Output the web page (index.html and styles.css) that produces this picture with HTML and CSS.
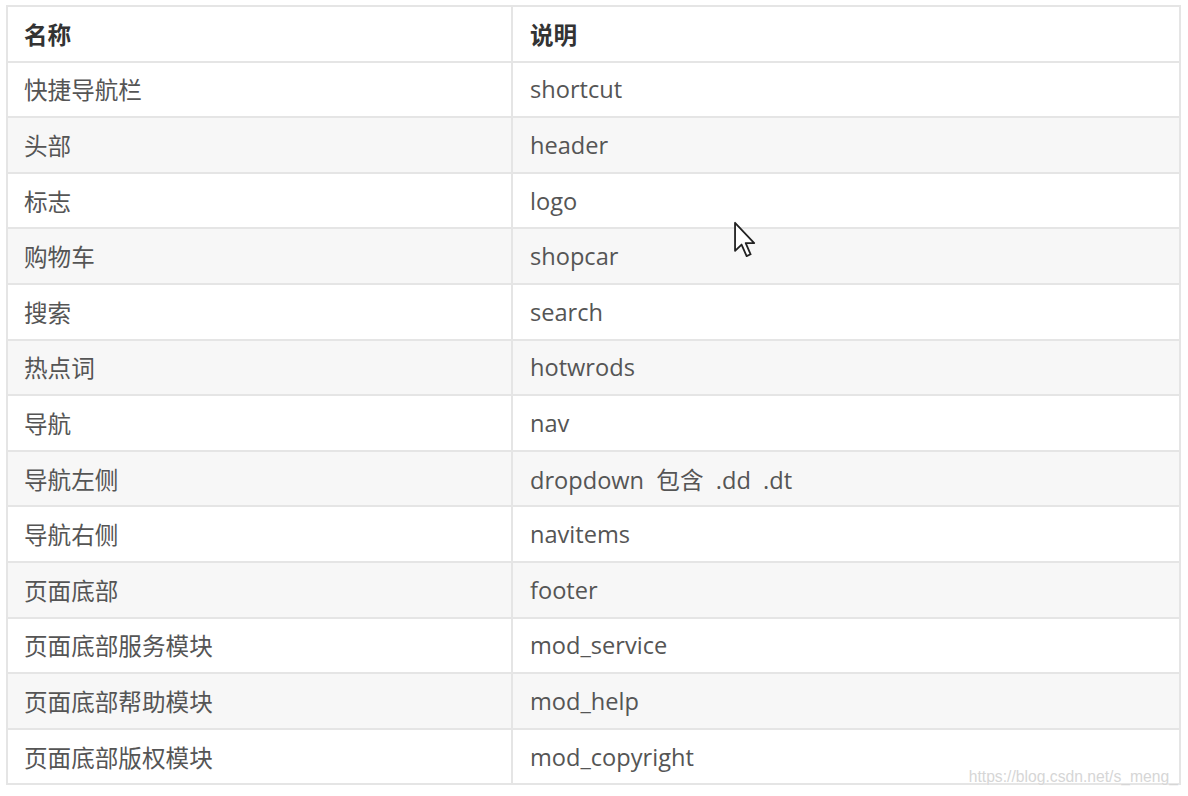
FILE: index.html
```html
<!DOCTYPE html>
<html lang="zh">
<head>
<meta charset="utf-8">
<link rel="stylesheet" href="styles.css">
</head>
<body>
<div class="page">
  <table class="names">
    <thead>
      <tr><th class="col-name">名称</th><th class="col-desc">说明</th></tr>
    </thead>
    <tbody>
      <tr><td>快捷导航栏</td><td>shortcut</td></tr>
      <tr><td>头部</td><td>header</td></tr>
      <tr><td>标志</td><td>logo</td></tr>
      <tr><td>购物车</td><td>shopcar</td></tr>
      <tr><td>搜索</td><td>search</td></tr>
      <tr><td>热点词</td><td>hotwrods</td></tr>
      <tr><td>导航</td><td>nav</td></tr>
      <tr><td>导航左侧</td><td>dropdown&nbsp; 包含&nbsp; .dd&nbsp; .dt</td></tr>
      <tr><td>导航右侧</td><td>navitems</td></tr>
      <tr><td>页面底部</td><td>footer</td></tr>
      <tr><td>页面底部服务模块</td><td>mod_service</td></tr>
      <tr><td>页面底部帮助模块</td><td>mod_help</td></tr>
      <tr><td>页面底部版权模块</td><td>mod_copyright</td></tr>
    </tbody>
  </table>
  <svg class="cursor" width="24" height="38" viewBox="0 0 13 21">
    <path d="M1 1 L1 16.5 L4.6 13 L7.4 19.4 L9.6 18.4 L6.9 12.2 L11.6 12.2 Z" fill="#fff" stroke="#222" stroke-width="1" stroke-linejoin="round"/>
  </svg>
  <div class="watermark">https://blog.csdn.net/s_meng_</div>
</div>
</body>
</html>
```
FILE: styles.css
```css
html, body {
  margin: 0;
  padding: 0;
  background: #ffffff;
}
.page {
  position: relative;
  width: 1188px;
  height: 796px;
  padding: 5px 0 0 6px;
  box-sizing: border-box;
}
.names {
  border-collapse: collapse;
  width: 1175px;
  table-layout: fixed;
  font-family: "Open Sans", "Noto Sans CJK SC", sans-serif;
  font-size: 23.6px;
  color: #555;
}
.names th, .names td {
  border: 2px solid #e5e5e5;
  height: 53.6px;
  padding: 0 0 0 16px;
  text-align: left;
  vertical-align: middle;
  white-space: nowrap;
}
.names th + th, .names td + td {
  padding-left: 17px;
}
.names .col-name {
  width: 487px;
}
.names th {
  font-weight: 700;
  color: #333;
}
.names tbody tr:nth-child(even) td {
  background: #f7f7f7;
}
.cursor {
  position: absolute;
  left: 733px;
  top: 221px;
}
.watermark {
  position: absolute;
  right: 10px;
  top: 768px;
  font-family: "Liberation Sans", Arial, sans-serif;
  font-size: 15.7px;
  color: #d6d6d6;
  text-shadow: 0 0 1px #fff;
}
```
